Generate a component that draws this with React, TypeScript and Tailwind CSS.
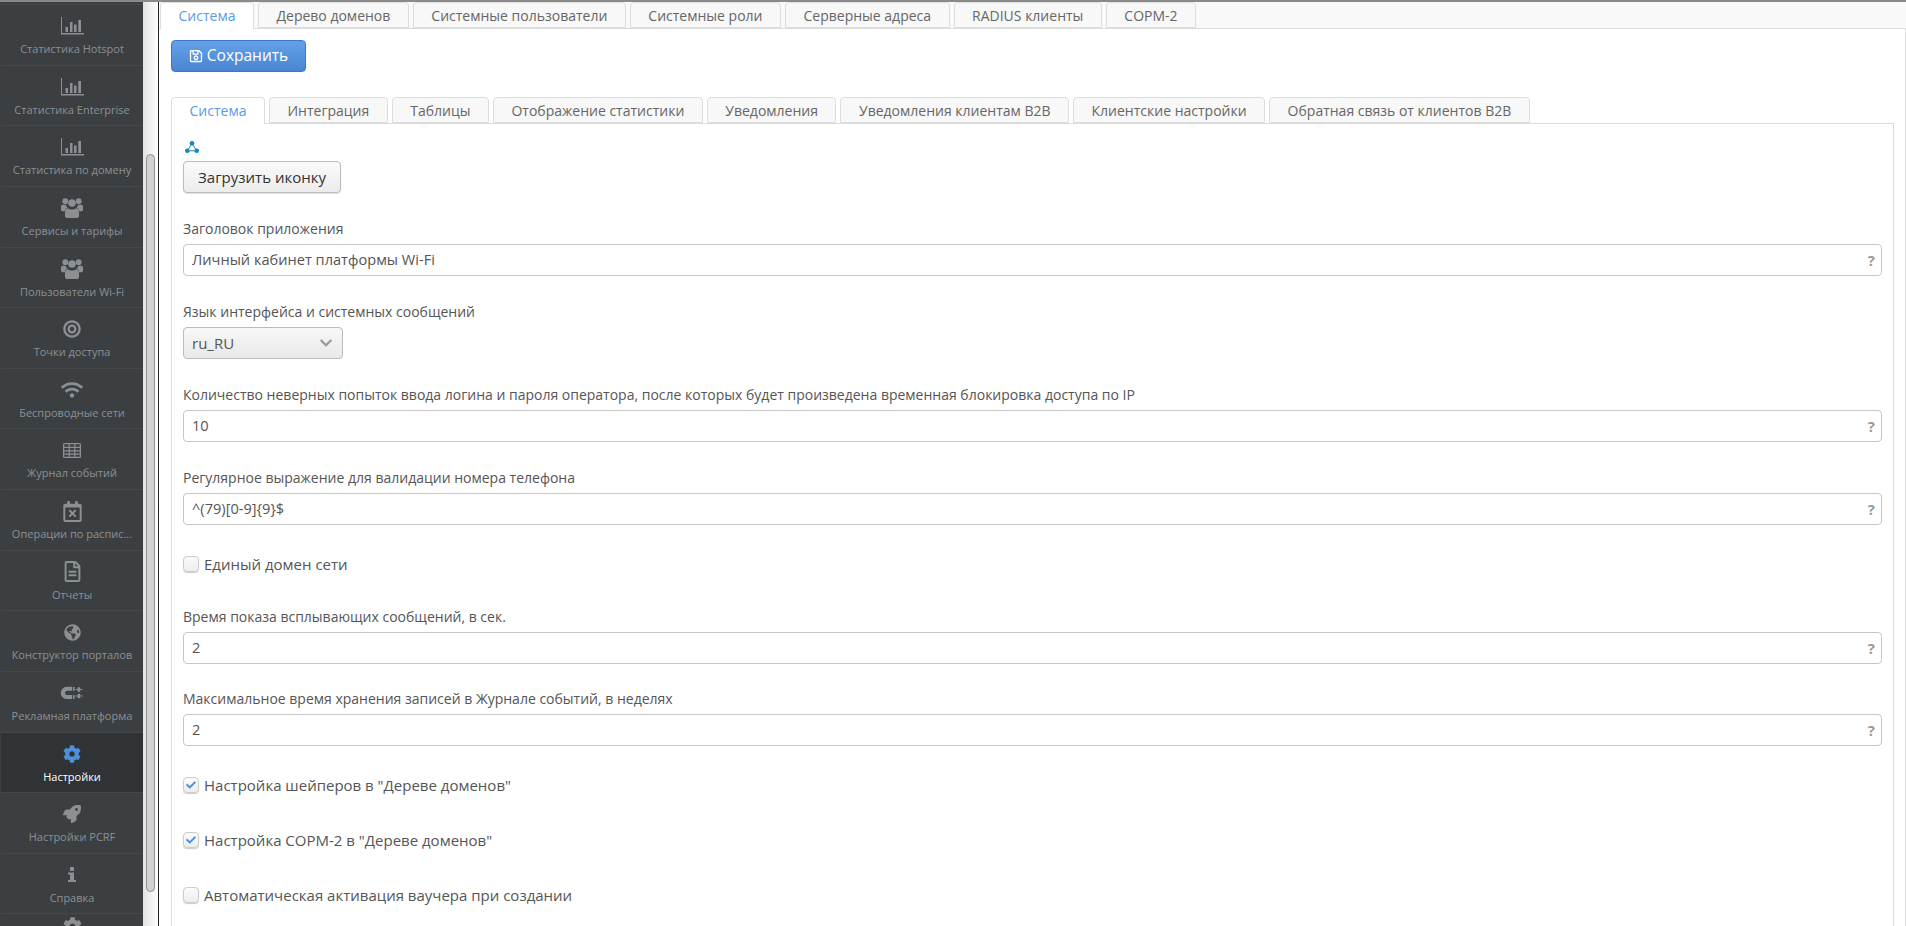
import React from "react";
import {
  FaBullseye,
  FaCheck,
  FaChevronDown,
  FaCog,
  FaGlobeAmericas,
  FaRegCalendarTimes,
  FaRegFileAlt,
  FaRegSave,
  FaRocket,
  FaWifi,
} from "react-icons/fa";

const BarChart = () => (
  <svg width="23" height="18" viewBox="0 0 23 18" fill="currentColor">
    <path d="M0 0h1v16h22v1.5H0z" />
    <rect x="4.5" y="10" width="2.5" height="5" />
    <rect x="9" y="5" width="2.5" height="10" />
    <rect x="13" y="7.5" width="2.5" height="7.5" />
    <rect x="17.3" y="3" width="2.7" height="12" />
  </svg>
);

const Users = () => (
  <svg width="22" height="20" viewBox="0 0 22 20" fill="currentColor">
    <circle cx="4.3" cy="3.2" r="2.9" />
    <circle cx="17.7" cy="3.2" r="2.9" />
    <circle cx="11" cy="5" r="3.8" />
    <path d="M0 8.5c0-1 .8-1.7 1.8-1.7h3c.3 1.3 1 2.2 1.8 3-1.5.5-2.4 1.5-2.7 3.4H1.5C.6 13.2 0 12.6 0 11.7zM22 8.5c0-1-.8-1.7-1.8-1.7h-3c-.3 1.3-1 2.2-1.8 3 1.5.5 2.4 1.5 2.7 3.4h2.4c.9 0 1.5-.6 1.5-1.5z" />
    <path d="M7 10.2c1 .8 2.5 1.3 4 1.3s3-.5 4-1.3c1.8.2 3 1.7 3 4V18c0 1.2-.8 2-2 2H6c-1.2 0-2-.8-2-2v-3.8c0-2.3 1.2-3.8 3-4z" />
  </svg>
);

const Grid = () => (
  <svg width="18" height="15" viewBox="0 0 18 15" fill="none" stroke="currentColor" strokeWidth="1.2">
    <rect x="0.6" y="0.6" width="16.8" height="13.8" rx="1" />
    <path d="M0.6 4.4h16.8M0.6 7.8h16.8M0.6 11.2h16.8M6.2 0.6v13.8M11.8 0.6v13.8" />
  </svg>
);

const MagnetPlug = () => (
  <svg width="26" height="13" viewBox="0 0 26 15" fill="currentColor">
    <path d="M7 1h6v4.5H7.5a2.5 2.5 0 0 0 0 5H13V15H7A7 7 0 0 1 7 1z" />
    <rect x="14" y="1" width="2" height="4.5" />
    <rect x="14" y="10.5" width="2" height="4.5" />
    <path d="M17 3.5h2.5V1.5h3v2H25v1h-2.5v2h-3v-2H17z" />
    <path d="M17 11h2.5V9h3v5h-3v-2H17z" />
    <rect x="22.5" y="11" width="3" height="1" />
  </svg>
);

const InfoMark = () => (
  <svg width="8" height="15" viewBox="0 0 8 15" fill="currentColor">
    <rect x="2" y="0" width="4" height="4" rx="0.6" />
    <path d="M0 5.5h6V13h2v2H0v-2h2V7.5H0z" />
  </svg>
);

const TriangleLogo = () => (
  <svg width="14" height="12" viewBox="0 0 14 12" fill="none" className="ml-[2px]">
    <path d="M7 2.4 2.4 9.8h9.2z" stroke="#1788b8" strokeWidth="1" />
    <circle cx="7" cy="2.3" r="2.3" fill="#1788b8" />
    <circle cx="2.3" cy="9.7" r="2.3" fill="#1788b8" />
    <circle cx="11.7" cy="9.7" r="2.3" fill="#1788b8" />
  </svg>
);

const navItems = [
  { label: "Статистика Hotspot", icon: <BarChart /> },
  { label: "Статистика Enterprise", icon: <BarChart /> },
  { label: "Статистика по домену", icon: <BarChart /> },
  { label: "Сервисы и тарифы", icon: <Users /> },
  { label: "Пользователи Wi-Fi", icon: <Users /> },
  { label: "Точки доступа", icon: <FaBullseye size={18} /> },
  { label: "Беспроводные сети", icon: <FaWifi size={22} /> },
  { label: "Журнал событий", icon: <Grid /> },
  { label: "Операции по распис...", icon: <FaRegCalendarTimes size={21} /> },
  { label: "Отчеты", icon: <FaRegFileAlt size={21} /> },
  { label: "Конструктор порталов", icon: <FaGlobeAmericas size={17} /> },
  { label: "Рекламная платформа", icon: <MagnetPlug /> },
  { label: "Настройки", icon: <FaCog size={18} />, active: true },
  { label: "Настройки PCRF", icon: <FaRocket size={18} /> },
  { label: "Справка", icon: <InfoMark /> },
];

const topTabs = [
  "Система",
  "Дерево доменов",
  "Системные пользователи",
  "Системные роли",
  "Серверные адреса",
  "RADIUS клиенты",
  "СОРМ-2",
];

const innerTabs = [
  "Система",
  "Интеграция",
  "Таблицы",
  "Отображение статистики",
  "Уведомления",
  "Уведомления клиентам B2B",
  "Клиентские настройки",
  "Обратная связь от клиентов B2B",
];

function Tab({ label, active }: { label: string; active: boolean }) {
  return (
    <div
      className={
        active
          ? "-mb-px h-[27px] rounded-t-[4px] border border-b-0 border-[#ddd] bg-white px-[17.5px] text-[14px] leading-[26px] text-[#5b9ae6]"
          : "h-[26px] rounded-t-[4px] border border-[#ddd] bg-[#f8f8f8] px-[17.5px] text-[14px] leading-[25px] text-[#666]"
      }
    >
      {label}
    </div>
  );
}

function TextField({ label, value, tight }: { label: string; value: string; tight?: boolean }) {
  return (
    <div className={tight ? "mb-[25px]" : "mb-[26px]"}>
      <div className="mb-[6px] h-[19px] whitespace-nowrap text-[14px] leading-[19px] text-[#555]">{label}</div>
      <div className="flex h-[32px] items-center justify-between rounded-[4px] border border-[#c6c6c6] bg-white pl-[8px] pr-[6px]">
        <input
          readOnly
          value={value}
          className="w-full bg-transparent text-[14.6px] text-[#555] outline-none"
        />
        <span className="text-[15px] font-bold text-[#999]">?</span>
      </div>
    </div>
  );
}

function CheckRow({ label, checked, className }: { label: string; checked?: boolean; className: string }) {
  return (
    <label className={`flex h-[26px] items-center gap-[5px] text-[15px] text-[#555] ${className}`}>
      <span className="flex h-[16px] w-[16px] items-center justify-center rounded-[4px] border border-[#ccc] bg-gradient-to-b from-[#fafafa] to-[#eeeeee] shadow-[0_1px_1px_rgba(0,0,0,0.2)]">
        {checked && <FaCheck size={10} className="text-[#4f90dc]" />}
      </span>
      {label}
    </label>
  );
}

export default function App() {
  return (
    <div
      className="flex h-screen flex-col overflow-hidden bg-white"
      style={{ fontFamily: '"Open Sans", "Noto Sans", sans-serif' }}
    >
      <div className="h-[2px] shrink-0 bg-[#8a8a8a]" />
      <div className="flex min-h-0 flex-1">
        {/* Left navigation with its scroll track */}
        <aside className="flex w-[143px] shrink-0 flex-col overflow-hidden bg-[#3b3f42] pl-px">
          <div className="h-[3px] shrink-0 border-b border-[#45494c]" />
          {navItems.map((item) => (
            <div
              key={item.label}
              className={
                item.active
                  ? "flex h-[60.63px] shrink-0 flex-col items-center border-b border-[#45494c] bg-[#2f3336] text-white"
                  : "flex h-[60.63px] shrink-0 flex-col items-center border-b border-[#45494c] text-[#8c9093]"
              }
            >
              <div
                className={
                  item.active
                    ? "flex h-[36px] items-center justify-center pt-[6px] text-[#4f90dc]"
                    : "flex h-[36px] items-center justify-center pt-[6px] text-[#8c9093]"
                }
              >
                {item.icon}
              </div>
              <div className="whitespace-nowrap text-[11px] leading-[16px]">{item.label}</div>
            </div>
          ))}
          <div className="flex justify-center pt-[3px] text-[#8c9093]">
            <FaCog size={19} />
          </div>
        </aside>
        <div className="relative w-[15px] shrink-0 bg-gradient-to-r from-[#e2e2e2] to-[#ffffff]">
          <div className="absolute left-[3px] top-[152px] h-[738px] w-[9px] rounded-full border border-[#8f8f8f] bg-[#d2d2d2]" />
        </div>
        <div className="w-px shrink-0 bg-[#222]" />

        {/* Settings page */}
        <main className="min-w-0 flex-1 overflow-hidden">
          <div className="flex h-[27px] gap-[4px] border-b border-[#ddd] bg-[#f9f9f9] pl-px">
            {topTabs.map((t, i) => (
              <Tab key={t} label={t} active={i === 0} />
            ))}
          </div>
          <div className="h-full border-r border-[#ddd] pl-[12px] pr-[11px]">
            <div className="pt-[11px]">
              <button className="flex h-[32px] w-[135px] items-center justify-center gap-[4px] rounded-[4px] border border-[#3f78bf] bg-gradient-to-b from-[#62a1e8] to-[#4a86d2] text-[15.5px] text-white">
                <FaRegSave size={14} />
                Сохранить
              </button>
            </div>
            <div className="mt-[25px] flex h-[26px] gap-[4px]">
              {innerTabs.map((t, i) => (
                <Tab key={t} label={t} active={i === 0} />
              ))}
            </div>
            <div className="h-full border border-[#ddd] px-[11px] pt-[17px]">
              <TriangleLogo />
              <button className="mt-[8px] block h-[32px] w-[158px] rounded-[4px] border border-[#bbb] bg-gradient-to-b from-[#fafafa] to-[#ececec] text-[15px] text-[#333] shadow-[0_1px_1px_rgba(0,0,0,0.12)]">
                Загрузить иконку
              </button>
              <div className="h-[26px]" />
              <TextField label="Заголовок приложения" value="Личный кабинет платформы Wi-Fi" />
              <div className="mb-[26px]">
                <div className="mb-[6px] h-[19px] text-[14px] leading-[19px] text-[#555]">
                  Язык интерфейса и системных сообщений
                </div>
                <div className="flex h-[32px] w-[160px] items-center justify-between rounded-[4px] border border-[#bbb] bg-gradient-to-b from-[#f8f8f8] to-[#e9e9e9] pl-[8px] pr-[9px] text-[15px] text-[#555]">
                  ru_RU
                  <FaChevronDown size={14} className="text-[#999]" />
                </div>
              </div>
              <TextField
                label="Количество неверных попыток ввода логина и пароля оператора, после которых будет произведена временная блокировка доступа по IP"
                value="10"
              />
              <TextField label="Регулярное выражение для валидации номера телефона" value="^(79)[0-9]{9}$" />
              <CheckRow label="Единый домен сети" className="mb-[30px] mt-[2px]" />
              <TextField label="Время показа всплывающих сообщений, в сек." value="2" tight />
              <TextField label="Максимальное время хранения записей в Журнале событий, в неделях" value="2" />
              <CheckRow label='Настройка шейперов в "Дереве доменов"' checked className="mb-[29px] mt-[2px]" />
              <CheckRow label='Настройка СОРМ-2 в "Дереве доменов"' checked className="mb-[29px]" />
              <CheckRow label="Автоматическая активация ваучера при создании" className="" />
            </div>
          </div>
        </main>
      </div>
    </div>
  );
}
